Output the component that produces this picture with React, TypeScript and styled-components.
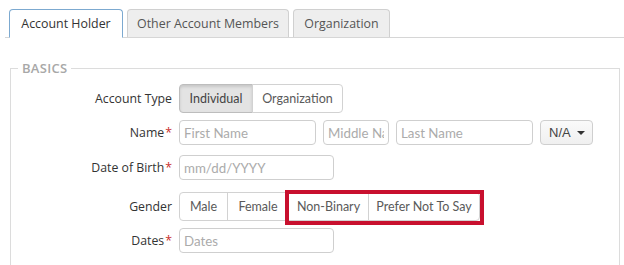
import React from "react";
import styled, { createGlobalStyle } from "styled-components";

const Global = createGlobalStyle`
  html, body { margin: 0; padding: 0; background: #fff; }
  body { font-family: "Open Sans", "Liberation Sans", sans-serif; color: #333; overflow: hidden; }
  * { box-sizing: border-box; }
`;

const Page = styled.div`
  width: 624px;
  height: 265px;
  padding-top: 9px;
  overflow: hidden;
`;

const TabBar = styled.div`
  display: flex;
  align-items: flex-end;
  gap: 4px;
  margin-left: 5px;
  padding-left: 4px;
  border-bottom: 1px solid #d6d6d6;
  height: 29px;
`;

const Tab = styled.div<{ $active?: boolean; $w: number }>`
  width: ${(p) => p.$w}px;
  height: ${(p) => (p.$active ? 29 : 28)}px;
  margin-bottom: ${(p) => (p.$active ? -1 : 0)}px;
  display: flex;
  align-items: center;
  justify-content: center;
  font-size: 12.4px;
  border: 1px solid ${(p) => (p.$active ? "#7ca9d0" : "#d0d0d0")};
  border-bottom: ${(p) => (p.$active ? "1px solid #fff" : "none")};
  border-radius: 4px 4px 0 0;
  background: ${(p) => (p.$active ? "#fff" : "#eeeeee")};
  color: ${(p) => (p.$active ? "#333" : "#555")};
  padding-bottom: 1px;
`;

const Fieldset = styled.fieldset`
  margin: 23px 4px 0 10px;
  padding: 9px 0 40px 10px;
  border: 1px solid #dcdcdc;
  min-height: 230px;
`;

const Legend = styled.legend`
  margin-left: -3px;
  padding: 0 4px;
  font-size: 13px;
  font-weight: 600;
  line-height: 14px;
  letter-spacing: 0.3px;
  color: #a8a8a8;
  text-transform: uppercase;
`;

const Row = styled.div<{ $mt: number; $h: number }>`
  display: grid;
  grid-template-columns: 151px 1fr;
  column-gap: 7px;
  align-items: center;
  margin-top: ${(p) => p.$mt}px;
  height: ${(p) => p.$h}px;
`;

const Label = styled.div`
  text-align: right;
  font-size: 12.3px;
  color: #333;
  white-space: nowrap;
`;

const Req = styled.span`
  color: #c9302c;
  margin-left: 1px;
`;

const Controls = styled.div`
  display: flex;
  gap: 7px;
  align-items: center;
`;

const Group = styled.div`
  display: inline-flex;
  height: 29px;
`;

const SegButton = styled.div<{ $active?: boolean; $w: number }>`
  width: ${(p) => p.$w}px;
  height: 100%;
  display: flex;
  align-items: center;
  justify-content: center;
  font-family: Lato, "Open Sans", sans-serif;
  font-size: 12.5px;
  color: ${(p) => (p.$active ? "#444" : "#5a5a5a")};
  border: 1px solid ${(p) => (p.$active ? "#bdbdbd" : "#d2d2d2")};
  background: ${(p) => (p.$active ? "#e3e3e3" : "#fff")};
  box-shadow: ${(p) => (p.$active ? "inset 0 2px 3px rgba(0,0,0,0.12)" : "none")};
  margin-left: -1px;
  white-space: nowrap;
  &:first-child { margin-left: 0; border-radius: 4px 0 0 4px; }
  &:last-child { border-radius: 0 4px 4px 0; }
`;

const Highlight = styled.div`
  position: relative;
  display: inline-flex;
  height: 100%;
  margin-left: -1px;
  & > ${SegButton}:first-child { margin-left: 0; border-radius: 0; }
  &::after {
    content: "";
    position: absolute;
    top: -2px;
    bottom: -4px;
    left: -3px;
    right: -4px;
    border: 4px solid #c8102e;
    pointer-events: none;
  }
`;

const Input = styled.input<{ $w: number }>`
  width: ${(p) => p.$w}px;
  height: 25px;
  border: 1px solid #cfcfcf;
  border-radius: 4px;
  padding: 0 4px;
  font-family: Lato, "Open Sans", sans-serif;
  font-size: 13.3px;
  color: #333;
  outline: none;
  &::placeholder { color: #ababab; }
`;

const Select = styled.div`
  width: 53px;
  height: 25px;
  border: 1px solid #cfcfcf;
  border-radius: 4px;
  background: linear-gradient(#fafafa, #f0f0f0);
  display: flex;
  align-items: center;
  padding: 0 7px 0 8px;
  justify-content: space-between;
  font-family: "Liberation Sans", Arial, sans-serif;
  font-size: 13px;
  color: #444;
`;

const Caret = styled.span`
  width: 0;
  height: 0;
  border-left: 4px solid transparent;
  border-right: 4px solid transparent;
  border-top: 4px solid #333;
`;

export default function App() {
  return (
    <Page>
      <Global />
      <TabBar>
        <Tab $active $w={114}>Account Holder</Tab>
        <Tab $w={162}>Other Account Members</Tab>
        <Tab $w={97}>Organization</Tab>
      </TabBar>
      <Fieldset>
        <Legend>Basics</Legend>
        <Row $mt={0} $h={29}>
          <Label>Account Type</Label>
          <Controls>
            <Group>
              <SegButton $active $w={74}>Individual</SegButton>
              <SegButton $w={91}>Organization</SegButton>
            </Group>
          </Controls>
        </Row>
        <Row $mt={7} $h={25}>
          <Label>
            Name<Req>*</Req>
          </Label>
          <Controls>
            <Input $w={137} placeholder="First Name" />
            <Input $w={66} placeholder="Middle Name" />
            <Input $w={137} placeholder="Last Name" />
            <Select>
              N/A
              <Caret />
            </Select>
          </Controls>
        </Row>
        <Row $mt={10} $h={25}>
          <Label>
            Date of Birth<Req>*</Req>
          </Label>
          <Controls>
            <Input $w={155} placeholder="mm/dd/YYYY" />
          </Controls>
        </Row>
        <Row $mt={12} $h={29}>
          <Label>Gender</Label>
          <Controls>
            <Group>
              <SegButton $w={49}>Male</SegButton>
              <SegButton $w={62}>Female</SegButton>
              <Highlight>
                <SegButton $w={81}>Non-Binary</SegButton>
                <SegButton $w={112}>Prefer Not To Say</SegButton>
              </Highlight>
            </Group>
          </Controls>
        </Row>
        <Row $mt={7} $h={25}>
          <Label>
            Dates<Req>*</Req>
          </Label>
          <Controls>
            <Input $w={155} placeholder="Dates" />
          </Controls>
        </Row>
      </Fieldset>
    </Page>
  );
}
